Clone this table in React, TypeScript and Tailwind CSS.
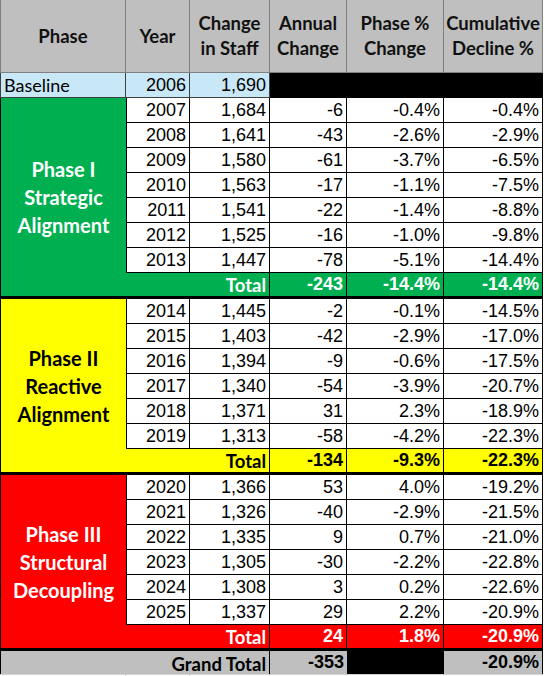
import clsx from "clsx";

type Phase = {
  label: string[];
  span: string;
  fill: string;
  ink: string;
  rows: string[][];
  total: string[];
};

const phases: Phase[] = [
  {
    label: ["Phase I", "Strategic", "Alignment"],
    span: "row-span-8",
    fill: "bg-[#00b050]",
    ink: "text-white",
    rows: [
      ["2007", "1,684", "-6", "-0.4%", "-0.4%"],
      ["2008", "1,641", "-43", "-2.6%", "-2.9%"],
      ["2009", "1,580", "-61", "-3.7%", "-6.5%"],
      ["2010", "1,563", "-17", "-1.1%", "-7.5%"],
      ["2011", "1,541", "-22", "-1.4%", "-8.8%"],
      ["2012", "1,525", "-16", "-1.0%", "-9.8%"],
      ["2013", "1,447", "-78", "-5.1%", "-14.4%"],
    ],
    total: ["-243", "-14.4%", "-14.4%"],
  },
  {
    label: ["Phase II", "Reactive", "Alignment"],
    span: "row-span-7",
    fill: "bg-[#ffff00]",
    ink: "text-black",
    rows: [
      ["2014", "1,445", "-2", "-0.1%", "-14.5%"],
      ["2015", "1,403", "-42", "-2.9%", "-17.0%"],
      ["2016", "1,394", "-9", "-0.6%", "-17.5%"],
      ["2017", "1,340", "-54", "-3.9%", "-20.7%"],
      ["2018", "1,371", "31", "2.3%", "-18.9%"],
      ["2019", "1,313", "-58", "-4.2%", "-22.3%"],
    ],
    total: ["-134", "-9.3%", "-22.3%"],
  },
  {
    label: ["Phase III", "Structural", "Decoupling"],
    span: "row-span-7",
    fill: "bg-[#ff0000]",
    ink: "text-white",
    rows: [
      ["2020", "1,366", "53", "4.0%", "-19.2%"],
      ["2021", "1,326", "-40", "-2.9%", "-21.5%"],
      ["2022", "1,335", "9", "0.7%", "-21.0%"],
      ["2023", "1,305", "-30", "-2.2%", "-22.8%"],
      ["2024", "1,308", "3", "0.2%", "-22.6%"],
      ["2025", "1,337", "29", "2.2%", "-20.9%"],
    ],
    total: ["24", "1.8%", "-20.9%"],
  },
];

const num =
  "flex items-end justify-end pr-[3px] pb-[2px] font-['Liberation_Sans',Arial,sans-serif] text-[18px] leading-[20px]";
const label = "font-['Lato',sans-serif] font-bold";

const headers = ["Phase", "Year", "Change\nin Staff", "Annual\nChange", "Phase %\nChange", "Cumulative\nDecline %"];

function App() {
  return (
    <div className="w-[545px] h-[676px] overflow-hidden bg-white text-black">
      <div className="grid w-[543px] grid-cols-[126px_64px_80px_77px_97px_99px]">
        {headers.map((h, i) => (
          <div
            key={h}
            className={clsx(
              "flex h-[73px] items-center justify-center whitespace-pre-line border-r border-b border-[#7f7f7f] bg-[#bfbfbf] text-center text-[18.5px] leading-[25px] text-[#111]",
              label,
              i === 0 && "border-l"
            )}
          >
            {h}
          </div>
        ))}

        <div className="flex h-[25px] items-end border-l border-r border-b border-[#404040] bg-[#c9e8f7] pl-[3px] pb-[2px] font-['Lato',sans-serif] text-[18px] leading-[20px]">
          Baseline
        </div>
        <div className={clsx(num, "h-[25px] border-r border-b border-[#404040] bg-[#c9e8f7]")}>2006</div>
        <div className={clsx(num, "h-[25px] border-r border-b border-[#404040] bg-[#c9e8f7]")}>1,690</div>
        <div className="col-span-3 h-[25px] bg-black" />

        {phases.map((p) => (
          <PhaseBlock key={p.label[0]} p={p} />
        ))}

        <div className={clsx("col-span-3 flex h-[23px] items-end justify-end border-l border-r border-black bg-[#bfbfbf] pr-[3px] text-[18.5px] leading-[20px]", label)}>
          Grand Total
        </div>
        <div className={clsx(num, "h-[23px] bg-[#bfbfbf] font-bold")}>-353</div>
        <div className="h-[23px] bg-black" />
        <div className={clsx(num, "h-[23px] border-r border-black bg-[#bfbfbf] font-bold")}>-20.9%</div>

        {[0, 1, 2, 3, 4, 5].map((i) => (
          <div key={i} className="h-[20px] border-t border-r border-[#d4d4d4]" />
        ))}
      </div>
    </div>
  );
}

function PhaseBlock({ p }: { p: Phase }) {
  return (
    <>
      <div
        className={clsx(
          p.span,
          p.fill,
          p.ink,
          label,
          "flex flex-col items-center justify-center border-l border-b-[3px] border-black text-[20px] leading-[28px]"
        )}
      >
        {p.label.map((l) => (
          <span key={l}>{l}</span>
        ))}
      </div>
      {p.rows.map((r) =>
        r.map((v, i) => (
          <div
            key={r[0] + i}
            className={clsx(num, "h-[25px] border-r border-b border-black bg-white", i === 0 && "border-l")}
          >
            {v}
          </div>
        ))
      )}
      <div
        className={clsx(
          "col-span-2 flex h-[26px] items-end justify-end border-r border-b-[3px] border-black pr-[3px] pb-[1px] text-[18.5px] leading-[20px]",
          p.fill,
          p.ink,
          label
        )}
      >
        Total
      </div>
      {p.total.map((v, i) => (
        <div key={i} className={clsx(num, "h-[26px] border-r border-b-[3px] border-black pb-[1px] font-bold", p.fill, p.ink)}>
          {v}
        </div>
      ))}
    </>
  );
}

export default App;
